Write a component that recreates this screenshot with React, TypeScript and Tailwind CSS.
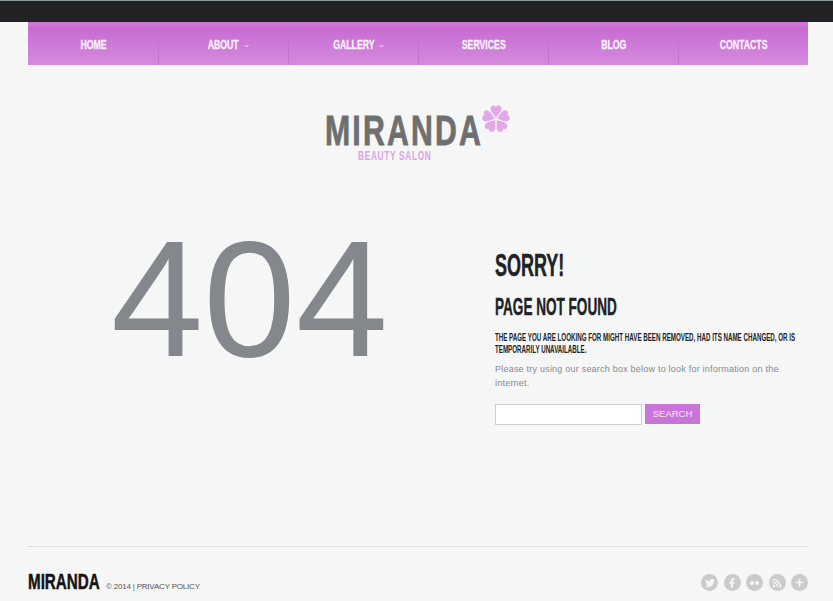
import { ReactNode } from "react";
import { FaFacebookF, FaPlus, FaRss, FaTwitter } from "react-icons/fa";

const navItems = [
  { label: "HOME", caretClass: "" },
  { label: "ABOUT", caretClass: "left-[85px]" },
  { label: "GALLERY", caretClass: "left-[90px]" },
  { label: "SERVICES", caretClass: "" },
  { label: "BLOG", caretClass: "" },
  { label: "CONTACTS", caretClass: "" },
];

// no Anton on this box, so bold Liberation gets squeezed and thickened instead
const Condensed = ({ children, className }: { children: ReactNode; className: string }) => (
  <div className={`w-max origin-left whitespace-nowrap font-bold ${className}`}>{children}</div>
);

const Flower = () => (
  <svg width="30" height="28" viewBox="-15 -15 30 28" className="shrink-0">
    {[0, 72, 144, 216, 288].map((deg) => (
      <path
        key={deg}
        transform={`rotate(${deg})`}
        d="M0 -1 C-0.8 -3.5 -5.5 -6.5 -5.5 -10.5 C-5.5 -13.8 -1.5 -14.6 0 -12 C1.5 -14.6 5.5 -13.8 5.5 -10.5 C5.5 -6.5 0.8 -3.5 0 -1 Z"
        fill="#e2a8e9"
      />
    ))}
  </svg>
);

const Social = ({ children }: { children: ReactNode }) => (
  <div className="flex h-[17px] w-[17px] items-center justify-center rounded-full bg-[#cbcbcb] text-[#f5f6f6]">
    {children}
  </div>
);

export default function App() {
  return (
    <div className="flex h-[601px] w-[833px] flex-col overflow-hidden bg-[#f5f6f6] bg-[repeating-linear-gradient(0deg,#f4f5f5_0px,#f4f5f5_1px,#f7f7f7_1px,#f7f7f7_3px)] font-['Liberation_Sans',sans-serif]">
      <div className="h-[22px] shrink-0 border-t border-t-[#8d979c] bg-[#212223]" />

      <nav className="mx-7 flex h-[43px] w-[780px] shrink-0 border-t-[5px] border-t-[#cf75d8] bg-gradient-to-b from-[#c76ad3] to-[#d48bdd]">
        {navItems.map((item, i) => (
          <div
            key={item.label}
            className={`relative flex w-[130px] items-center justify-center pb-[2px] text-[#fdf3fd] ${i > 0 ? "border-l border-l-[#c373cf]" : ""}`}
          >
            <span className="w-max whitespace-nowrap text-[13px] font-bold [-webkit-text-stroke:0.3px_#fdf3fd] [transform:scaleX(0.67)]">
              {item.label}
            </span>
            {item.caretClass && (
              <svg width="5" height="4" viewBox="0 0 5 4" className={`absolute top-[17px] ${item.caretClass}`}>
                <path d="M0.5 1 L2.5 3 L4.5 1" fill="none" stroke="#f3dcf5" strokeWidth="1" />
              </svg>
            )}
          </div>
        ))}
      </nav>

      <div className="mt-[38px] flex h-[60px] shrink-0 items-start justify-center pl-[2px]">
        <div className="w-[156px] pt-[10px]">
          <Condensed className="text-[42px] leading-[36px] tracking-[3px] text-[#6f6f6f] [-webkit-text-stroke:0.8px_#6f6f6f] [transform:scaleX(0.72)]">
            MIRANDA
          </Condensed>
          <Condensed className="ml-[33px] mt-[1px] text-[12px] leading-[12px] tracking-[1px] text-[#dda4e4] [transform:scaleX(0.69)]">
            BEAUTY SALON
          </Condensed>
        </div>
        <div className="pt-[1px]">
          <Flower />
        </div>
      </div>

      <main className="mx-7 flex w-[780px] flex-1 pt-[46px]">
        <div className="w-[467px] pl-[83px] text-[166px] leading-[180px] text-[#84878c]">404</div>
        <div className="w-[313px] pt-[42px]">
          <Condensed className="text-[31px] leading-[30px] text-[#212223] [-webkit-text-stroke:0.5px_#212223] [transform:scaleX(0.58)]">
            SORRY!
          </Condensed>
          <Condensed className="mt-[14px] text-[24px] leading-[24px] text-[#212223] [-webkit-text-stroke:0.4px_#212223] [transform:scaleX(0.565)]">
            PAGE NOT FOUND
          </Condensed>
          <div className="mt-[13px] text-[10px] leading-[12px] text-[#212223]">
            <Condensed className="[transform:scaleX(0.62)]">
              THE PAGE YOU ARE LOOKING FOR MIGHT HAVE BEEN REMOVED, HAD ITS NAME CHANGED, OR IS
            </Condensed>
            <Condensed className="[transform:scaleX(0.62)]">TEMPORARILY UNAVAILABLE.</Condensed>
          </div>
          <p className="mt-[6px] text-[9px] leading-[14px] tracking-[0.22px] text-[#8a8a8a]">
            Please try using our search box below to look for information on the internet.
          </p>
          <div className="mt-[14px] flex items-start gap-[3px]">
            <input className="h-[21px] w-[147px] border border-[#cfcfcf] bg-white outline-none" />
            <button className="h-[20px] w-[55px] bg-[#c974d8] text-[9.5px] text-[#f6e6f8]">SEARCH</button>
          </div>
        </div>
      </main>

      <footer className="mx-7 h-[55px] w-[780px] shrink-0 border-t border-dotted border-t-[#cccccc]">
        <div className="flex items-start justify-between pt-[24px]">
          <div className="flex items-start">
            <div className="w-[78px]">
              <Condensed className="text-[22px] leading-[22px] text-[#141414] [-webkit-text-stroke:0.5px_#141414] [transform:scaleX(0.69)]">
                MIRANDA
              </Condensed>
            </div>
            <span className="mt-[9px] text-[8px] leading-[14px] tracking-[-0.2px] text-[#555555]">© 2014 | PRIVACY POLICY</span>
          </div>
          <div className="flex gap-[5.5px] pt-[3px]">
            <Social><FaTwitter size={10} /></Social>
            <Social><FaFacebookF size={10} /></Social>
            <Social>
              <span className="flex gap-[1px]">
                <i className="h-[4px] w-[4px] rounded-full bg-[#f5f6f6]" />
                <i className="h-[4px] w-[4px] rounded-full bg-[#f5f6f6]" />
              </span>
            </Social>
            <Social><FaRss size={10} /></Social>
            <Social><FaPlus size={9} /></Social>
          </div>
        </div>
      </footer>
    </div>
  );
}
